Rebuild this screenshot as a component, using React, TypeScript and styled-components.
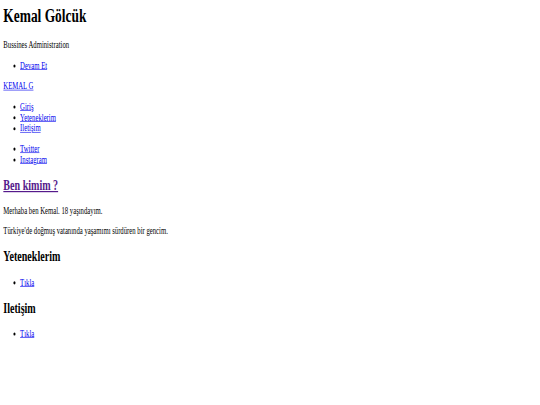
import React from "react";
import styled, { createGlobalStyle } from "styled-components";

const GlobalStyle = createGlobalStyle`
  html, body {
    margin: 0;
    padding: 0;
    background: #ffffff;
    overflow: hidden;
  }
`;

const Frame = styled.div`
  width: 540px;
  height: 405px;
  overflow: hidden;
`;

const Page = styled.div`
  width: 1264px;
  padding: 8px;
  font-family: "Liberation Serif", "Times New Roman", serif;
  font-size: 16px;
  color: #000000;
  transform: scale(0.419, 0.6025);
  transform-origin: 0 0;
`;

const Title = styled.h1`
  font-size: 32px;
  font-weight: bold;
  margin: 0 0 21.44px;
`;

const Text = styled.p`
  margin: 16px 0;
`;

const List = styled.ul`
  margin: 16px 0;
  padding-left: 40px;
  list-style: disc;
`;

const Item = styled.li``;

const Link = styled.a<{ $visited?: boolean }>`
  color: ${(p) => (p.$visited ? "#551a8b" : "#0000ee")};
  text-decoration: underline;
  cursor: pointer;
`;

const Brand = styled.div`
  margin: 0;
`;

const SectionTitle = styled.h2`
  font-size: 24px;
  font-weight: bold;
  margin: 19.92px 0;
`;

export default function App() {
  return (
    <>
      <GlobalStyle />
      <Frame>
        <Page>
          <Title>Kemal Gölcük</Title>
          <Text>Bussines Administration</Text>
          <List>
            <Item>
              <Link href="#">Devam Et</Link>
            </Item>
          </List>
          <Brand>
            <Link href="#">KEMAL G</Link>
          </Brand>
          <List>
            <Item>
              <Link href="#">Giriş</Link>
            </Item>
            <Item>
              <Link href="#">Yeteneklerim</Link>
            </Item>
            <Item>
              <Link href="#">Iletişim</Link>
            </Item>
          </List>
          <List>
            <Item>
              <Link href="#">Twitter</Link>
            </Item>
            <Item>
              <Link href="#">Instagram</Link>
            </Item>
          </List>
          <SectionTitle>
            <Link href="#" $visited>
              Ben kimim ?
            </Link>
          </SectionTitle>
          <Text>Merhaba ben Kemal. 18 yaşındayım.</Text>
          <Text>Türkiye'de doğmuş vatanında yaşamımı sürdüren bir gencim.</Text>
          <SectionTitle>Yeteneklerim</SectionTitle>
          <List>
            <Item>
              <Link href="#">Tıkla</Link>
            </Item>
          </List>
          <SectionTitle>Iletişim</SectionTitle>
          <List>
            <Item>
              <Link href="#">Tıkla</Link>
            </Item>
          </List>
        </Page>
      </Frame>
    </>
  );
}
